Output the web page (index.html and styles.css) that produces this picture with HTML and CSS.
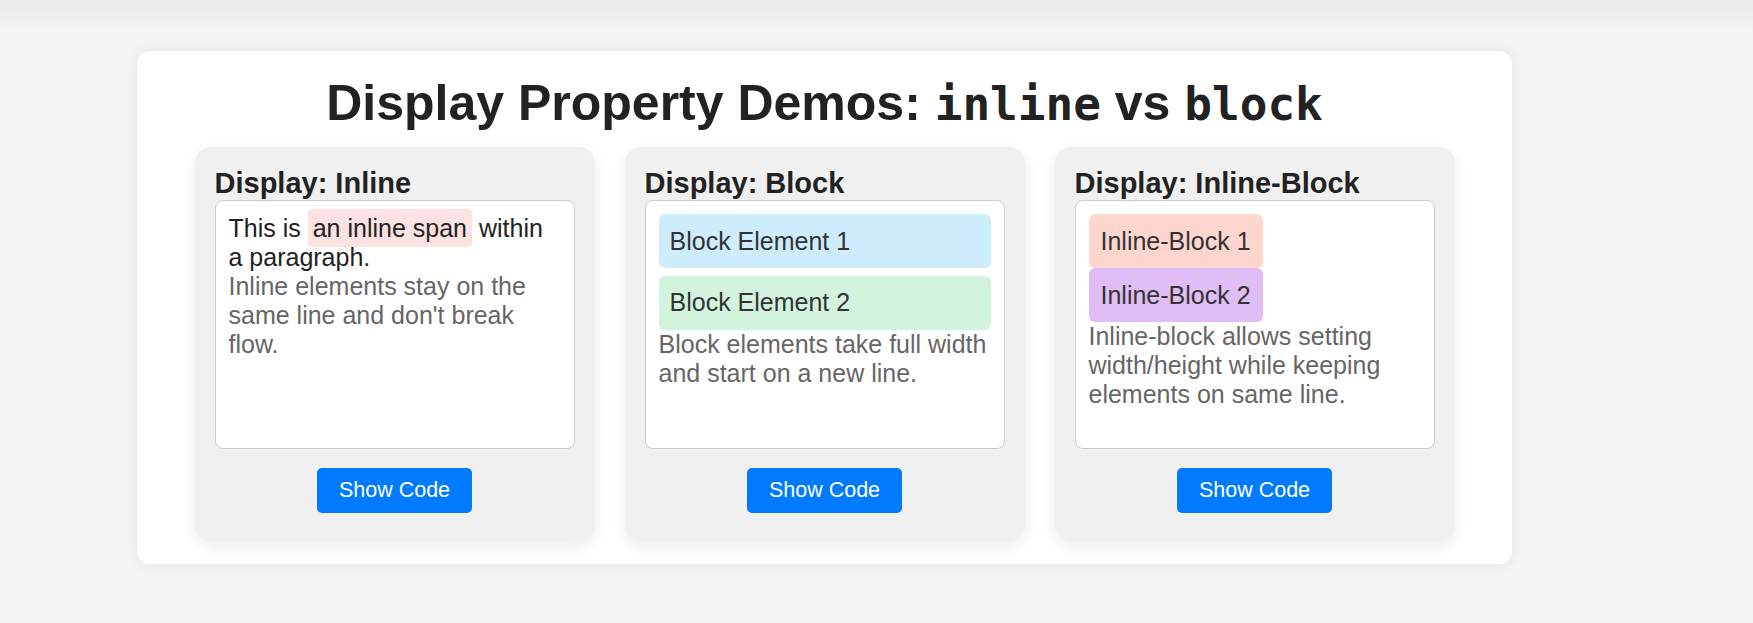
FILE: index.html
```html
<!DOCTYPE html>
<html lang="en">
<head>
<meta charset="utf-8">
<title>Display Property Demos</title>
<link rel="stylesheet" href="styles.css">
</head>
<body>
<main class="container">
  <h1 class="title">Display Property Demos: <code class="mono">inline</code> vs <code class="mono">block</code></h1>
  <div class="cards">
    <section class="card">
      <h3 class="card-title">Display: Inline</h3>
      <div class="demo">
        <p class="lead">This is <span class="inline-span">an inline span</span> within a paragraph.</p>
        <p class="desc">Inline elements stay on the same line and don't break flow.</p>
      </div>
      <button class="btn">Show Code</button>
    </section>
    <section class="card">
      <h3 class="card-title">Display: Block</h3>
      <div class="demo">
        <div class="block block-blue">Block Element 1</div>
        <div class="block block-green">Block Element 2</div>
        <p class="desc">Block elements take full width and start on a new line.</p>
      </div>
      <button class="btn">Show Code</button>
    </section>
    <section class="card">
      <h3 class="card-title">Display: Inline-Block</h3>
      <div class="demo">
        <div class="ib ib-salmon">Inline-Block 1</div>
        <div class="ib ib-purple">Inline-Block 2</div>
        <p class="desc">Inline-block allows setting width/height while keeping elements on same line.</p>
      </div>
      <button class="btn">Show Code</button>
    </section>
  </div>
</main>
</body>
</html>
```
FILE: styles.css
```css
html {
  background: #f4f4f4 linear-gradient(to bottom, #e8e8e8 0, #f4f4f4 30px) no-repeat;
}
body {
  margin: 0;
  padding: 51px 0 40px 137px;
  font-family: "Liberation Sans", Arial, sans-serif;
  font-size: 25px;
  color: #222;
}
.container {
  width: 1375px;
  box-sizing: border-box;
  background: #fff;
  border-radius: 13px;
  box-shadow: 0 0 14px rgba(0, 0, 0, 0.07);
  padding: 24px 0 23px;
}
.title {
  margin: 0 0 15px;
  text-align: center;
  font-size: 50px;
  line-height: 57px;
  font-weight: bold;
  color: #222;
}
.mono {
  font-family: "DejaVu Sans Mono", "Liberation Mono", monospace;
  font-size: 46px;
  line-height: 1;
  font-weight: bold;
}
.cards {
  display: flex;
  justify-content: center;
  gap: 30px;
}
.card {
  width: 400px;
  box-sizing: border-box;
  background: #f0f0f0;
  border-radius: 16px;
  padding: 20px 20px 28px;
  box-shadow: 0 5px 16px rgba(0, 0, 0, 0.08);
  display: flex;
  flex-direction: column;
  align-items: stretch;
}
.card-title {
  margin: 0;
  font-size: 29px;
  font-weight: bold;
  color: #222;
}
.demo {
  height: 249px;
  box-sizing: border-box;
  background: #fff;
  border: 1px solid #cccccc;
  border-radius: 8px;
  padding: 13px;
  margin-bottom: 19px;
}
.lead {
  margin: 0;
  color: #222;
}
.desc {
  margin: 0;
  color: #666;
}
.inline-span {
  background: #fde2e2;
  padding: 5px 5px;
  border-radius: 4px;
}
.block {
  padding: 12.5px 11px;
  border-radius: 6px;
  color: #333;
}
.block + .block {
  margin-top: 7.5px;
}
.block-blue {
  background: #cdedfd;
}
.block-green {
  background: #d2f4df;
}
.ib {
  display: inline-block;
  padding: 12.5px 12px;
  border-radius: 6px;
  color: #333;
}
.ib-salmon {
  background: #fdd6cf;
}
.ib-purple {
  background: #e1bdf5;
}
.btn {
  align-self: center;
  font-family: "Liberation Sans", Arial, sans-serif;
  font-size: 21.5px;
  padding: 10px 22px;
  border: none;
  border-radius: 5px;
  background: #007bff;
  color: #fff;
  cursor: pointer;
}
```
